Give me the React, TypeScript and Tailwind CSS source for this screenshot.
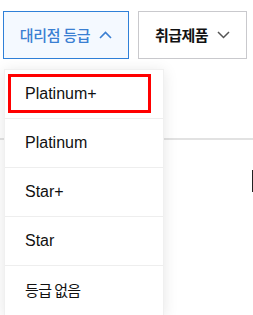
import React from "react";

const items = ["Platinum+", "Platinum", "Star+", "Star", "등급 없음"];

export default function App() {
  return (
    <div
      className="relative w-[253px] h-[315px] overflow-hidden bg-white"
      style={{ fontFamily: '"Liberation Sans", Arial, "Noto Sans CJK KR", sans-serif' }}
    >
      <div className="flex pt-[11px] pl-[3px] gap-[9px]">
        <button className="flex items-center justify-center gap-[9px] w-[126px] h-[48px] border border-[#2f80d8] bg-[#f4f9ff] text-[#3a7fd2] text-[15px] font-medium tracking-[-0.3px]">
          <span style={{ fontFamily: '"Noto Sans CJK KR", sans-serif' }}>대리점 등급</span>
          <svg width="13" height="8" viewBox="0 0 13 8" fill="none">
            <path d="M1 7L6.5 1.5L12 7" stroke="#3a7fd2" strokeWidth="1.6" />
          </svg>
        </button>
        <button className="flex items-center justify-center gap-[9px] w-[109px] h-[48px] border border-[#c9c9cd] bg-white text-[#111] text-[15px] font-semibold tracking-[-0.6px]">
          <span style={{ fontFamily: '"Noto Sans CJK KR", sans-serif' }}>취급제품</span>
          <svg width="13" height="8" viewBox="0 0 13 8" fill="none">
            <path d="M1 1L6.5 6.5L12 1" stroke="#555" strokeWidth="1.5" />
          </svg>
        </button>
      </div>

      <div className="absolute left-0 right-0 top-[138px] h-[2px] bg-[#e2e2e2]" />
      <div className="absolute left-[252px] top-[170px] w-[1px] h-[22px] bg-[#222]" />

      <div className="absolute left-[4px] top-[69px] w-[160px] bg-white border border-[#f0f0f0] shadow-[0_2px_14px_rgba(0,0,0,0.1)]">
        {items.map((t, i) => (
          <div
            key={t}
            className={`flex items-center h-[49px] pl-[20px] text-[16px] text-[#111] ${
              i < items.length - 1 ? "border-b border-[#eeeeee]" : ""
            }`}
          >
            {i === 4 ? (
              <span
                className="text-[15px] tracking-[-0.6px] whitespace-pre"
                style={{ fontFamily: '"Noto Sans CJK KR", sans-serif' }}
              >
                {t}
              </span>
            ) : (
              t
            )}
          </div>
        ))}
      </div>

      <div className="absolute left-[8px] top-[74px] w-[143px] h-[39px] border-[3px] border-[#ff0000]" />
    </div>
  );
}
